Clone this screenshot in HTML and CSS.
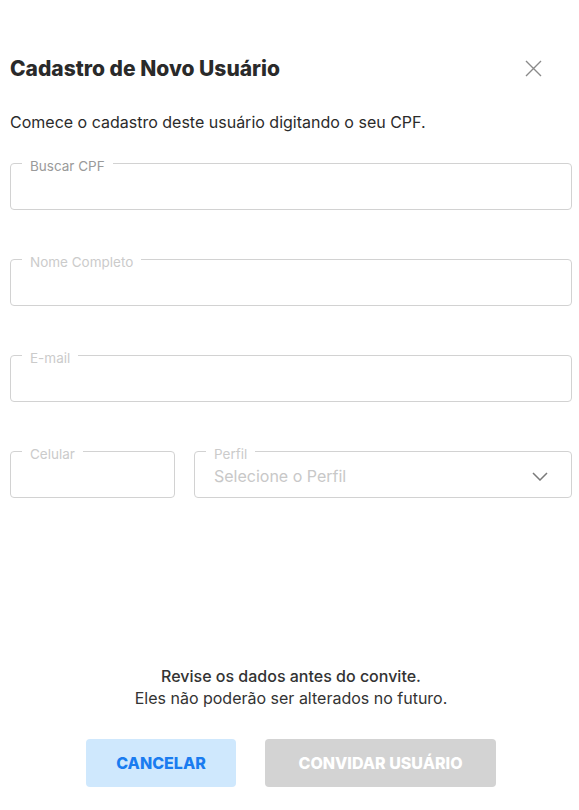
FILE: index.html
```html
<!DOCTYPE html>
<html lang="pt-BR">
<head>
    <meta charset="UTF-8">
    <meta name="viewport" content="width=device-width, initial-scale=1.0">
    <title>Cadastro de Novo Usuário</title>
    <link rel="stylesheet" href="styles.css">
</head>
<body>
    <div class="dialog">
        <div class="dialog-header">
            <h1 class="dialog-title">Cadastro de Novo Usuário</h1>
            <button class="close-btn" aria-label="Fechar">
                <svg width="17" height="17" viewBox="0 0 17 17">
                    <path d="M1 1 L16 16 M16 1 L1 16" stroke="#8a8a8a" stroke-width="1.4" fill="none"/>
                </svg>
            </button>
        </div>

        <p class="intro">Comece o cadastro deste usuário digitando o seu CPF.</p>

        <form class="user-form">
            <fieldset class="field active">
                <legend>Buscar CPF</legend>
                <input type="text">
            </fieldset>

            <fieldset class="field">
                <legend>Nome Completo</legend>
                <input type="text" disabled>
            </fieldset>

            <fieldset class="field">
                <legend>E-mail</legend>
                <input type="text" disabled>
            </fieldset>

            <div class="field-row">
                <fieldset class="field">
                    <legend>Celular</legend>
                    <input type="text" disabled>
                </fieldset>
                <fieldset class="field">
                    <legend>Perfil</legend>
                    <div class="select">
                        <span>Selecione o Perfil</span>
                        <svg width="16" height="9" viewBox="0 0 16 9">
                            <path d="M1 1 L8 8 L15 1" stroke="#7a7a7a" stroke-width="1.5" fill="none"/>
                        </svg>
                    </div>
                </fieldset>
            </div>
        </form>

        <div class="dialog-footer">
            <p class="notice">
                <strong>Revise os dados antes do convite.</strong><br>
                Eles não poderão ser alterados no futuro.
            </p>
            <div class="actions">
                <button class="btn btn-cancel">Cancelar</button>
                <button class="btn btn-invite" disabled>Convidar Usuário</button>
            </div>
        </div>
    </div>
</body>
</html>
```

FILE: styles.css
```css
body {
    margin: 0;
    font-family: 'Inter', 'Lato', sans-serif;
    background-color: #ffffff;
    color: #2b2b2b;
}

.dialog {
    display: flex;
    flex-direction: column;
    height: 100vh;
    box-sizing: border-box;
    padding: 50px 7px 23px 10px;
}

.dialog-header {
    display: flex;
    justify-content: space-between;
    align-items: center;
    height: 36px;
}

.dialog-title {
    margin: 0;
    font-size: 21px;
    font-weight: 800;
    color: #2a2a2a;
}

.close-btn {
    width: 36px;
    height: 36px;
    margin-right: 21px;
    padding: 0;
    border: none;
    background: none;
    display: flex;
    align-items: center;
    justify-content: center;
    cursor: pointer;
}

.intro {
    margin: 24px 0 0;
    font-size: 16px;
    line-height: 24px;
    color: #2b2b2b;
}

.user-form {
    display: flex;
    flex-direction: column;
    gap: 38px;
    margin-top: 18px;
}

/* campo com o rótulo recortado na borda */
.field {
    margin: 0;
    padding: 0 19px;
    border: 1px solid #d2d2d2;
    border-radius: 4px;
    min-width: 0;
}

.field legend {
    margin-left: -8px;
    padding: 6px 8px 0;
    font-size: 13.5px;
    line-height: 16px;
    color: #cbcbcb;
}

.field.active legend {
    color: #9a9a9a;
}

.field input {
    display: block;
    width: 100%;
    height: 35px;
    padding: 0;
    border: none;
    outline: none;
    background: none;
    font-family: inherit;
    font-size: 16px;
}

.field-row {
    display: grid;
    grid-template-columns: 165px 1fr;
    gap: 19px;
}

.select {
    display: flex;
    align-items: center;
    justify-content: space-between;
    box-sizing: border-box;
    height: 35px;
    padding: 0 4px 7px 0;
    font-size: 16px;
    color: #c8c8c8;
    cursor: pointer;
}

.dialog-footer {
    margin-top: auto;
    text-align: center;
}

.notice {
    margin: 0;
    font-size: 16px;
    line-height: 22px;
    color: #333333;
}

.notice strong {
    font-weight: 500;
}

.actions {
    display: flex;
    justify-content: center;
    gap: 29px;
    margin-top: 30px;
}

.btn {
    height: 48px;
    padding: 0;
    border: none;
    border-radius: 4px;
    font-family: inherit;
    font-size: 16px;
    font-weight: 800;
    text-transform: uppercase;
    cursor: pointer;
}

.btn-cancel {
    width: 150px;
    background-color: #cfe8fd;
    color: #1a7cf0;
}

.btn-invite {
    width: 231px;
    background-color: #d3d3d3;
    color: #ffffff;
    cursor: default;
}
```
